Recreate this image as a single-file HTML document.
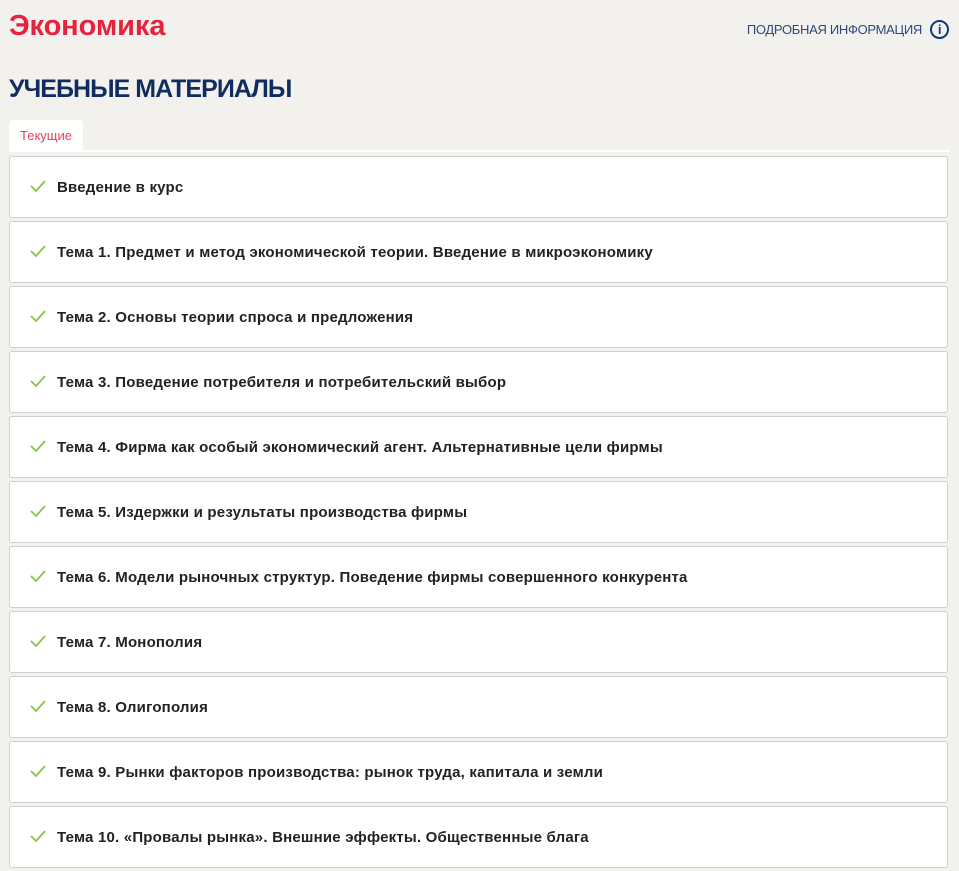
<!DOCTYPE html>
<html><head><meta charset="utf-8"><style>
body{margin:0;background:#f2f1ee;font-family:"Liberation Sans","DejaVu Sans",sans-serif;width:959px;height:871px;overflow:hidden;position:relative}
.t{position:absolute;left:9px;top:10px;color:#e8213f;font-size:29px;font-weight:bold;letter-spacing:-0.1px}
.info{position:absolute;right:10px;top:20px;color:#2d4a7a;font-size:13px;display:flex;align-items:center;letter-spacing:-0.3px}
.info span.i{display:inline-block;width:15px;height:15px;border:2px solid #0d3a78;border-radius:50%;margin-left:8px;text-align:center;font-weight:bold;font-size:13px;line-height:15px;color:#0d3a78}
h1{position:absolute;left:9px;top:75px;margin:0;font-size:25px;color:#0f2d5e;font-weight:bold;letter-spacing:-0.95px}
.tab{position:absolute;left:9px;top:120px;width:74px;height:31px;background:#fff;border-radius:4px 4px 0 0;color:#e8405a;font-size:13px;text-align:center;line-height:31px}
.line{position:absolute;left:9px;right:9px;top:150px;height:2px;background:#fff}
.c{position:absolute;left:9px;width:937px;height:60px;background:#fff;border:1px solid #cfcfcf;border-radius:3px;box-sizing:content-box}
.c svg{position:absolute;left:20px;top:23px}
.c div{position:absolute;left:47px;top:22px;font-size:15px;font-weight:bold;color:#222;letter-spacing:0.2px}
</style></head><body>
<div class="t">Экономика</div>
<div class="info">ПОДРОБНАЯ ИНФОРМАЦИЯ<span class="i">i</span></div>
<h1>УЧЕБНЫЕ МАТЕРИАЛЫ</h1>
<div class="tab">Текущие</div>
<div class="line"></div>
<div class="c" style="top:156px"><svg width="16" height="12"><path d="M1 6 L6 11 L15 1" stroke="#8bc34a" stroke-width="1.8" fill="none"/></svg><div>Введение в курс</div></div>
<div class="c" style="top:221px"><svg width="16" height="12"><path d="M1 6 L6 11 L15 1" stroke="#8bc34a" stroke-width="1.8" fill="none"/></svg><div>Тема 1. Предмет и метод экономической теории. Введение в микроэкономику</div></div>
<div class="c" style="top:286px"><svg width="16" height="12"><path d="M1 6 L6 11 L15 1" stroke="#8bc34a" stroke-width="1.8" fill="none"/></svg><div>Тема 2. Основы теории спроса и предложения</div></div>
<div class="c" style="top:351px"><svg width="16" height="12"><path d="M1 6 L6 11 L15 1" stroke="#8bc34a" stroke-width="1.8" fill="none"/></svg><div>Тема 3. Поведение потребителя и потребительский выбор</div></div>
<div class="c" style="top:416px"><svg width="16" height="12"><path d="M1 6 L6 11 L15 1" stroke="#8bc34a" stroke-width="1.8" fill="none"/></svg><div>Тема 4. Фирма как особый экономический агент. Альтернативные цели фирмы</div></div>
<div class="c" style="top:481px"><svg width="16" height="12"><path d="M1 6 L6 11 L15 1" stroke="#8bc34a" stroke-width="1.8" fill="none"/></svg><div>Тема 5. Издержки и результаты производства фирмы</div></div>
<div class="c" style="top:546px"><svg width="16" height="12"><path d="M1 6 L6 11 L15 1" stroke="#8bc34a" stroke-width="1.8" fill="none"/></svg><div>Тема 6. Модели рыночных структур. Поведение фирмы совершенного конкурента</div></div>
<div class="c" style="top:611px"><svg width="16" height="12"><path d="M1 6 L6 11 L15 1" stroke="#8bc34a" stroke-width="1.8" fill="none"/></svg><div>Тема 7. Монополия</div></div>
<div class="c" style="top:676px"><svg width="16" height="12"><path d="M1 6 L6 11 L15 1" stroke="#8bc34a" stroke-width="1.8" fill="none"/></svg><div>Тема 8. Олигополия</div></div>
<div class="c" style="top:741px"><svg width="16" height="12"><path d="M1 6 L6 11 L15 1" stroke="#8bc34a" stroke-width="1.8" fill="none"/></svg><div>Тема 9. Рынки факторов производства: рынок труда, капитала и земли</div></div>
<div class="c" style="top:806px"><svg width="16" height="12"><path d="M1 6 L6 11 L15 1" stroke="#8bc34a" stroke-width="1.8" fill="none"/></svg><div>Тема 10. «Провалы рынка». Внешние эффекты. Общественные блага</div></div>
</body></html>
